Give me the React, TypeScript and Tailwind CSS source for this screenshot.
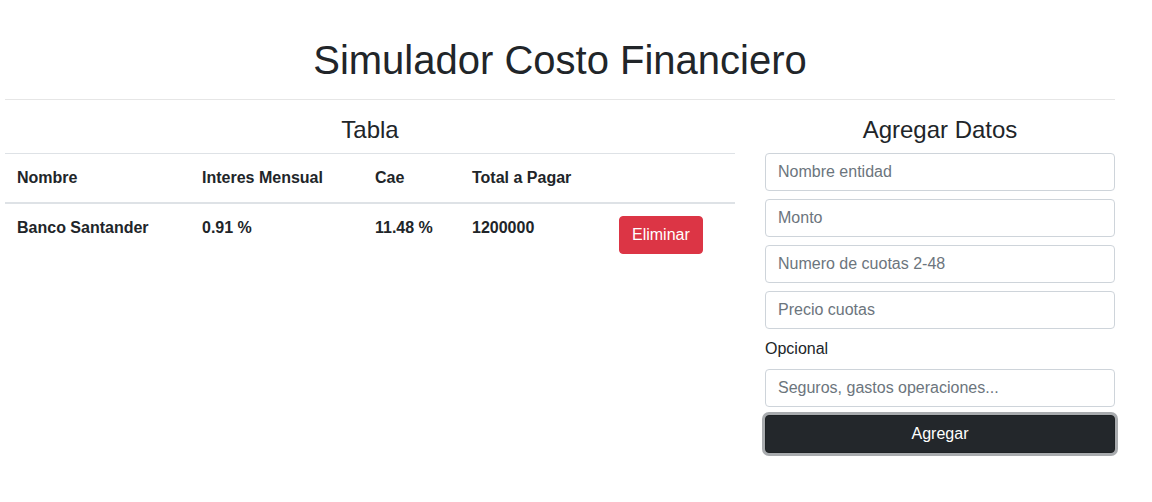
const rows = [
  { nombre: "Banco Santander", interes: "0.91 %", cae: "11.48 %", total: "1200000" },
];

const fields = ["Nombre entidad", "Monto", "Numero de cuotas 2-48", "Precio cuotas"];

export default function App() {
  return (
    <div className="min-h-screen bg-white text-[#212529] font-['Liberation_Sans',Arial,sans-serif]">
      <div className="ml-[5px] w-[1110px] pt-[36px]">
        <h1 className="text-center text-[40px] leading-[48px] font-normal">Simulador Costo Financiero</h1>
        <hr className="mt-[15px] border-t border-[#e6e6e6]" />

        <div className="mt-[16px] flex gap-[30px]">
          {/* Tabla */}
          <div className="w-[730px]">
            <h3 className="text-center text-[24px] leading-[28.8px] mb-[8px]">Tabla</h3>
            <table className="w-full table-fixed border-collapse text-[16px] leading-[24px]">
              <colgroup>
                <col className="w-[185px]" />
                <col className="w-[173px]" />
                <col className="w-[97px]" />
                <col className="w-[147px]" />
                <col className="w-[128px]" />
              </colgroup>
              <thead>
                <tr className="border-t border-[#dee2e6] border-b-2 border-b-[#dee2e6]">
                  <th className="p-[12px] text-left font-bold">Nombre</th>
                  <th className="p-[12px] text-left font-bold">Interes Mensual</th>
                  <th className="p-[12px] text-left font-bold">Cae</th>
                  <th className="p-[12px] text-left font-bold">Total a Pagar</th>
                  <th className="p-[12px]"></th>
                </tr>
              </thead>
              <tbody>
                {rows.map((r) => (
                  <tr key={r.nombre}>
                    <td className="p-[12px] align-top font-bold">{r.nombre}</td>
                    <td className="p-[12px] align-top font-bold">{r.interes}</td>
                    <td className="p-[12px] align-top font-bold">{r.cae}</td>
                    <td className="p-[12px] align-top font-bold">{r.total}</td>
                    <td className="p-[12px] align-top">
                      <button className="h-[38px] px-[12px] rounded-[4px] border border-[#dc3545] bg-[#dc3545] text-white text-[16px] leading-[24px]">
                        Eliminar
                      </button>
                    </td>
                  </tr>
                ))}
              </tbody>
            </table>
          </div>

          {/* Agregar Datos */}
          <div className="w-[350px]">
            <h3 className="text-center text-[24px] leading-[28.8px] mb-[8px]">Agregar Datos</h3>
            <div className="flex flex-col gap-[8px]">
              {fields.map((f) => (
                <input
                  key={f}
                  placeholder={f}
                  className="h-[38px] w-full rounded-[4px] border border-[#ced4da] px-[12px] text-[16px] placeholder:text-[#6c757d] outline-none"
                />
              ))}
              <label className="text-[16px] leading-[24px]">Opcional</label>
              <input
                placeholder="Seguros, gastos operaciones..."
                className="h-[38px] w-full rounded-[4px] border border-[#ced4da] px-[12px] text-[16px] placeholder:text-[#6c757d] outline-none"
              />
              <button className="h-[38px] w-full rounded-[4px] border border-[#1d2124] bg-[#23272b] text-white text-[16px] leading-[24px] shadow-[0_0_0_3px_rgba(82,88,93,0.5)]">
                Agregar
              </button>
            </div>
          </div>
        </div>
      </div>
    </div>
  );
}
